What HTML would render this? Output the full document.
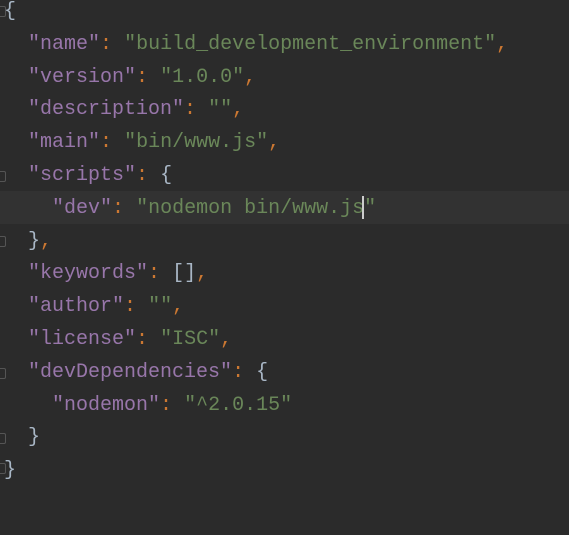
<!DOCTYPE html><html><head><style>
body{margin:0;background:#2b2b2b;width:569px;height:535px;overflow:hidden;position:relative}
pre{margin:0;position:absolute;top:-4px;left:4px;font:20px/32.8px "Liberation Mono",monospace;color:#a9b7c6}
.k{color:#9876aa}.s{color:#6a8759}.p{color:#cc7832}
.hl{position:absolute;left:0;top:191px;width:569px;height:33px;background:#323232}
.cur{position:absolute;left:362px;top:196px;width:2px;height:23px;background:#ccc}
.f{position:absolute;left:0;width:5px;height:9px;border:1px solid #555;border-left:none;border-radius:0 2px 2px 0}
</style></head><body>
<div class="hl"></div>
<div class="f" style="top:6px"></div><div class="f" style="top:171px"></div><div class="f" style="top:236px"></div><div class="f" style="top:368px"></div><div class="f" style="top:433px"></div><div class="f" style="top:463px"></div>
<pre>{
  <span class="k">"name"</span><span class="p">:</span> <span class="s">"build_development_environment"</span><span class="p">,</span>
  <span class="k">"version"</span><span class="p">:</span> <span class="s">"1.0.0"</span><span class="p">,</span>
  <span class="k">"description"</span><span class="p">:</span> <span class="s">""</span><span class="p">,</span>
  <span class="k">"main"</span><span class="p">:</span> <span class="s">"bin/www.js"</span><span class="p">,</span>
  <span class="k">"scripts"</span><span class="p">:</span> {
    <span class="k">"dev"</span><span class="p">:</span> <span class="s">"nodemon bin/www.js"</span>
  }<span class="p">,</span>
  <span class="k">"keywords"</span><span class="p">:</span> []<span class="p">,</span>
  <span class="k">"author"</span><span class="p">:</span> <span class="s">""</span><span class="p">,</span>
  <span class="k">"license"</span><span class="p">:</span> <span class="s">"ISC"</span><span class="p">,</span>
  <span class="k">"devDependencies"</span><span class="p">:</span> {
    <span class="k">"nodemon"</span><span class="p">:</span> <span class="s">"^2.0.15"</span>
  }
}</pre>
<div class="cur"></div>
</body></html>
